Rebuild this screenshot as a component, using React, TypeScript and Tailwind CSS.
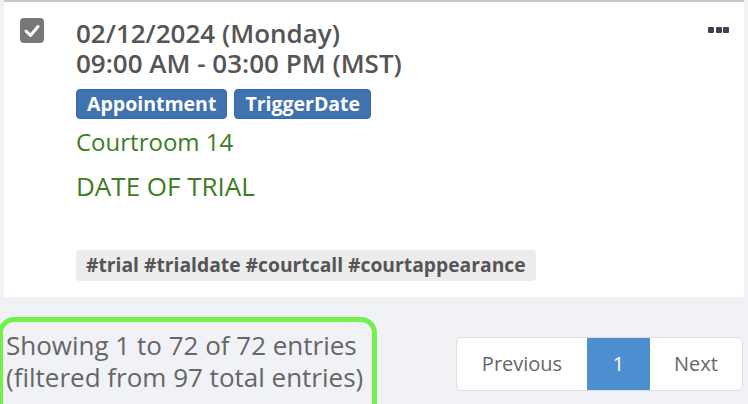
import React from "react";

export default function App() {
  return (
    <div className="w-[748px] h-[404px] bg-[#f1f2f5] overflow-hidden font-['Open_Sans',sans-serif]">
      <div className="ml-[4px] w-[740px] h-[297px] bg-white border-t-2 border-[#c8c8c8] relative flex">
        <div className="pl-[16px] pt-[16px]">
          <svg width="24" height="25" viewBox="0 0 24 25">
            <rect x="0" y="0" width="24" height="25" rx="4" fill="#777777" />
            <path d="M6 13 L10.5 17.5 L18 8.5" stroke="#ffffff" strokeWidth="3" fill="none" strokeLinecap="round" strokeLinejoin="round" />
          </svg>
        </div>
        <div className="ml-[32px] pt-[16px] flex flex-col items-start">
          <div className="text-[26px] leading-[30px] font-semibold text-[#555555]">
            <div>02/12/2024 (Monday)</div>
            <div>09:00 AM - 03:00 PM (MST)</div>
          </div>
          <div className="flex gap-[7px] mt-[11px]">
            <span className="h-[30px] px-[10px] flex items-center rounded-[4px] bg-[#3f72af] border border-[#3a68a0] text-white font-bold text-[19.5px]">Appointment</span>
            <span className="h-[30px] px-[10px] flex items-center rounded-[4px] bg-[#3f72af] border border-[#3a68a0] text-white font-bold text-[19.5px]">TriggerDate</span>
          </div>
          <div className="mt-[6px] text-[24px] leading-[34px] text-[#3c7d22]">Courtroom 14</div>
          <div className="mt-[10px] text-[26px] leading-[34px] text-[#3c7d22]">DATE OF TRIAL</div>
          <div className="mt-[47px] h-[31px] px-[10px] flex items-center rounded-[4px] bg-[#ececec] text-[19.3px] font-bold text-[#555555]">#trial #trialdate #courtcall #courtappearance</div>
        </div>
        <div className="absolute right-[15px] top-[25px] flex gap-[1.5px]">
          <span className="w-[6px] h-[6px] rounded-[1px] bg-[#3b4252]" />
          <span className="w-[6px] h-[6px] rounded-[1px] bg-[#3b4252]" />
          <span className="w-[6px] h-[6px] rounded-[1px] bg-[#3b4252]" />
        </div>
      </div>
      <div className="flex justify-between items-start pt-[20px] pr-[5px]">
        <div className="ml-[-2px] w-[379px] h-[110px] border-[5px] border-[#72f04b] rounded-[16px] pl-[3px] pt-[7px] text-[26px] leading-[32px] text-[#666666] whitespace-nowrap">
          <div>Showing 1 to 72 of 72 entries</div>
          <div>(filtered from 97 total entries)</div>
        </div>
        <div className="mt-[20px] flex h-[54px] text-[20px] rounded-[6px] border border-[#dddddd] bg-white overflow-hidden">
          <div className="w-[130px] flex items-center justify-center text-[#666666]">Previous</div>
          <div className="w-[63px] flex items-center justify-center bg-[#4e8fd2] text-white">1</div>
          <div className="w-[92px] flex items-center justify-center text-[#666666]">Next</div>
        </div>
      </div>
    </div>
  );
}
